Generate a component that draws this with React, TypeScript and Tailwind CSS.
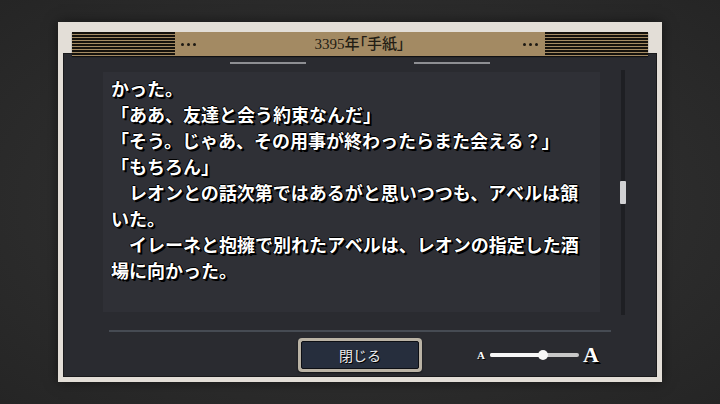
import React from "react";

const lines = [
  "かった。",
  "「ああ、友達と会う約束なんだ」",
  "「そう。じゃあ、その用事が終わったらまた会える？」",
  "「もちろん」",
  "　レオンとの話次第ではあるがと思いつつも、アベルは頷",
  "いた。",
  "　イレーネと抱擁で別れたアベルは、レオンの指定した酒",
  "場に向かった。",
];

const Stripes = () => (
  <div className="h-full w-[103px] bg-[repeating-linear-gradient(to_bottom,#15120d_0px,#15120d_1.6px,#a38a63_1.6px,#a38a63_3px)]" />
);

const Dots = () => (
  <div className="flex items-center gap-[3px]">
    <span className="size-[3px] rounded-full bg-[#1d1912]" />
    <span className="size-[3px] rounded-full bg-[#1d1912]" />
    <span className="size-[3px] rounded-full bg-[#1d1912]" />
  </div>
);

export default function App() {
  return (
    <div className="w-[720px] h-[404px] flex items-center justify-center bg-[radial-gradient(ellipse_at_center,#3a3a3a_0%,#2d2d2d_55%,#252525_100%)] font-['Noto_Sans_CJK_JP',sans-serif]">
      {/* Letter frame */}
      <div className="w-[604px] h-[360px] flex flex-col bg-[#e3ded7] px-[5px] pt-[10px] pb-[5px] shadow-[0_0_12px_rgba(0,0,0,0.5)]">
        {/* Header */}
        <div className="relative z-10 mx-[9px] h-[24px] flex items-center bg-[#a38a63] shadow-[0_1px_1px_rgba(0,0,0,0.6)]">
          <Stripes />
          <div className="ml-[6px]">
            <Dots />
          </div>
          <div className="flex-1 text-center text-[15px] leading-none font-medium text-[#231d14] font-['Liberation_Serif','Noto_Sans_CJK_JP',serif] [font-feature-settings:'palt']">
            3395年「手紙」
          </div>
          <div className="mr-[7px]">
            <Dots />
          </div>
          <Stripes />
        </div>

        {/* Dark panel */}
        <div className="-mt-[3px] flex-1 flex flex-col bg-[#2a2b30] border border-[#1a1a1c] pt-[8px]">
          <div className="flex justify-center gap-[108px]">
            <div className="w-[76px] h-[2px] bg-[#8e8f93]" />
            <div className="w-[76px] h-[2px] bg-[#8e8f93]" />
          </div>

          <div className="mt-[8px] flex items-start pl-[39px]">
            <div className="w-[497px] h-[240px] bg-[#2f3036] pl-[8px] pt-[3px] overflow-hidden">
              {lines.map((l, i) => (
                <div
                  key={i}
                  className="whitespace-pre text-[18px] leading-[26px] font-bold text-white [text-shadow:2px_2px_0_#000,1px_1px_0_#000,-1px_0_0_#000,0_-1px_0_#000,1px_0_0_#000]"
                >
                  {l}
                </div>
              ))}
            </div>
            <div className="relative ml-[21px] -mt-[2px] w-[4px] h-[245px] bg-[#1e1f23]">
              <div className="absolute left-[-1px] top-[111px] w-[6px] h-[23px] bg-[#d2d2d4] rounded-[1px]" />
            </div>
          </div>

          <div className="mt-[15px] ml-[45px] w-[502px] h-[2px] bg-[#464b53]" />

          <div className="mt-[6px] flex items-center pl-[234px]">
            <div className="w-[124px] h-[34px] rounded-[4px] bg-[#bab3a5] p-[3px] shadow-[0_1px_2px_rgba(0,0,0,0.6)]">
              <div className="h-full w-full rounded-[2px] border border-[#0d0f14] bg-[#262e3d] flex items-center justify-center text-[14px] text-[#ececec] [text-shadow:1px_1px_0_#000]">
                閉じる
              </div>
            </div>

            <div className="ml-[55px] flex items-center">
              <span className="text-[11px] leading-none font-bold text-white font-['Liberation_Serif',serif] [text-shadow:1px_1px_0_#000]">
                A
              </span>
              <div className="relative ml-[5px] w-[89px] h-[4px] rounded-full bg-[#c8c8c8]">
                <div className="absolute left-0 top-0 h-full w-[53px] rounded-full bg-[#f7f7f7]" />
                <div className="absolute left-[48px] top-[-3px] size-[10px] rounded-full bg-[#f7f7f7]" />
              </div>
              <span className="ml-[4px] text-[22px] leading-none font-bold text-white font-['Liberation_Serif',serif] [text-shadow:2px_2px_0_#000]">
                A
              </span>
            </div>
          </div>
        </div>
      </div>
    </div>
  );
}
